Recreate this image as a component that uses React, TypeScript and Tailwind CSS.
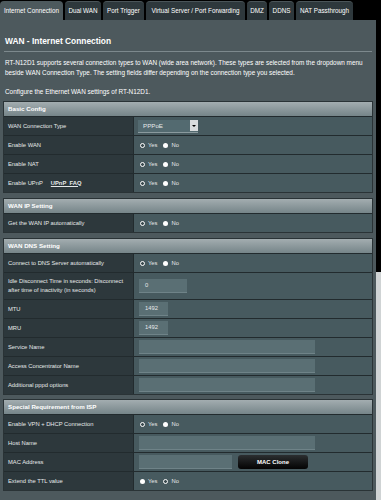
import React from "react";

const tabs = [
  { label: "Internet Connection", w: "w-[63px]", active: true },
  { label: "Dual WAN", w: "w-[36px]" },
  { label: "Port Trigger", w: "w-[41px]" },
  { label: "Virtual Server / Port Forwarding", w: "w-[99px]" },
  { label: "DMZ", w: "w-[20px]" },
  { label: "DDNS", w: "w-[25px]" },
  { label: "NAT Passthrough", w: "w-[57px]" },
];

// filled = white dot, otherwise a ring
const Radio = ({ filled }: { filled?: boolean }) => (
  <span
    className={
      filled
        ? "inline-block h-[5px] w-[5px] rounded-full bg-white"
        : "inline-block h-[5px] w-[5px] rounded-full border border-white bg-[#3a4a4f]"
    }
  />
);

const YesNo = ({ firstFilled }: { firstFilled?: boolean }) => (
  <div className="flex items-center gap-[3px] pl-[6px]">
    <Radio filled={firstFilled} />
    <span className="mr-[3px]">Yes</span>
    <Radio filled={!firstFilled} />
    <span>No</span>
  </div>
);

const Input = ({ value, w }: { value?: string; w: string }) => (
  <div
    className={`ml-[5px] flex h-[14px] items-center border-b border-[#6f8388] bg-[#5a6f74] pl-[6px] ${w}`}
  >
    {value}
  </div>
);

const Row = ({
  label,
  children,
  tall,
}: {
  label: React.ReactNode;
  children?: React.ReactNode;
  tall?: boolean;
}) => (
  <div
    className={`grid grid-cols-[130px_1fr] border-t border-[#222b2e] ${tall ? "h-[27px]" : "h-[19px]"}`}
  >
    <div className="flex items-center border-r border-[#222b2e] bg-[#2d383c] px-[4px] leading-[9px]">
      {label}
    </div>
    <div className="flex items-center bg-[#475a5f]">{children}</div>
  </div>
);

const Header = ({ title }: { title: string }) => (
  <div className="flex h-[14px] items-center bg-gradient-to-b from-[#a3adb0] to-[#768589] px-[4px] text-[6.2px] font-bold text-white">
    {title}
  </div>
);

const Table = ({ children }: { children: React.ReactNode }) => (
  <div className="mx-[3px] border border-[#2a3336] text-[5.8px] text-[#e6e9ea]">
    {children}
  </div>
);

export default function App() {
  return (
    <div
      className="flex h-[500px] w-[381px] flex-col bg-black"
      style={{ fontFamily: '"Liberation Sans", Arial, sans-serif' }}
    >
      <div className="flex h-[20px] items-end gap-[2px] pt-[1px]">
        {tabs.map((t) => (
          <div
            key={t.label}
            className={`flex h-[19px] shrink-0 items-center justify-center whitespace-nowrap rounded-t-[4px] text-[6.3px] text-white ${t.w} ${
              t.active ? "bg-[#4d595d]" : "border-t border-[#4a5458] bg-[#2e383c]"
            }`}
          >
            {t.label}
          </div>
        ))}
      </div>

      <div className="flex flex-1">
        <div className="flex w-[376px] flex-col bg-[#4d595d] pt-[15px] text-white">
          <h1 className="px-[5px] text-[8.4px] font-bold leading-[12px]">
            WAN - Internet Connection
          </h1>
          <div className="mx-[4px] mt-[4px] h-px bg-[#7d898d]" />
          <p className="mt-[6px] px-[5px] text-[6.4px] leading-[10px]">
            RT-N12D1 supports several connection types to WAN (wide area network). These
            types are selected from the dropdown menu beside WAN Connection Type. The
            setting fields differ depending on the connection type you selected.
          </p>
          <p className="mt-[9px] px-[5px] text-[6.4px] leading-[10px]">
            Configure the Ethernet WAN settings of RT-N12D1.
          </p>

          <div className="mt-[4px]">
            <Table>
              <Header title="Basic Config" />
              <Row label="WAN Connection Type">
                <div className="ml-[4px] flex h-[13px] w-[60px] items-center justify-between border-b border-[#8a9a9e] bg-[#536a70] pl-[5px] text-[6.2px]">
                  PPPoE
                  <span className="flex h-[11px] w-[8px] items-center justify-center bg-[#d9dcdd]">
                    <span className="h-0 w-0 border-x-[2px] border-t-[2px] border-x-transparent border-t-black" />
                  </span>
                </div>
              </Row>
              <Row label="Enable WAN">
                <YesNo />
              </Row>
              <Row label="Enable NAT">
                <YesNo />
              </Row>
              <Row
                label={
                  <span>
                    Enable UPnP
                    <span className="ml-[8px] font-bold underline">UPnP&nbsp;&nbsp;FAQ</span>
                  </span>
                }
              >
                <YesNo />
              </Row>
            </Table>
          </div>

          <div className="mt-[5px]">
            <Table>
              <Header title="WAN IP Setting" />
              <Row label="Get the WAN IP automatically">
                <YesNo />
              </Row>
            </Table>
          </div>

          <div className="mt-[5px]">
            <Table>
              <Header title="WAN DNS Setting" />
              <Row label="Connect to DNS Server automatically">
                <YesNo />
              </Row>
              <Row
                tall
                label="Idle Disconnect Time in seconds: Disconnect after time of inactivity (in seconds)"
              >
                <Input value="0" w="w-[48px]" />
              </Row>
              <Row label="MTU">
                <Input value="1492" w="w-[29px]" />
              </Row>
              <Row label="MRU">
                <Input value="1492" w="w-[29px]" />
              </Row>
              <Row label="Service Name">
                <Input w="w-[176px]" />
              </Row>
              <Row label="Access Concentrator Name">
                <Input w="w-[176px]" />
              </Row>
              <Row label="Additional pppd options">
                <Input w="w-[176px]" />
              </Row>
            </Table>
          </div>

          <div className="mt-[4px]">
            <Table>
              <Header title="Special Requirement from ISP" />
              <Row label="Enable VPN + DHCP Connection">
                <YesNo />
              </Row>
              <Row label="Host Name">
                <Input w="w-[176px]" />
              </Row>
              <Row label="MAC Address">
                <Input w="w-[93px]" />
                <button className="ml-[6px] h-[14px] w-[70px] rounded-[3px] bg-gradient-to-b from-[#2c2f31] to-[#050505] text-[6px] font-bold text-white">
                  MAC Clone
                </button>
              </Row>
              <Row label="Extend the TTL value">
                <YesNo firstFilled />
              </Row>
            </Table>
          </div>
        </div>
        <div className="flex w-[5px] flex-col">
          <div className="h-[252px] bg-black" />
          <div className="flex-1 bg-[#cfd3d4]" />
        </div>
      </div>
    </div>
  );
}
